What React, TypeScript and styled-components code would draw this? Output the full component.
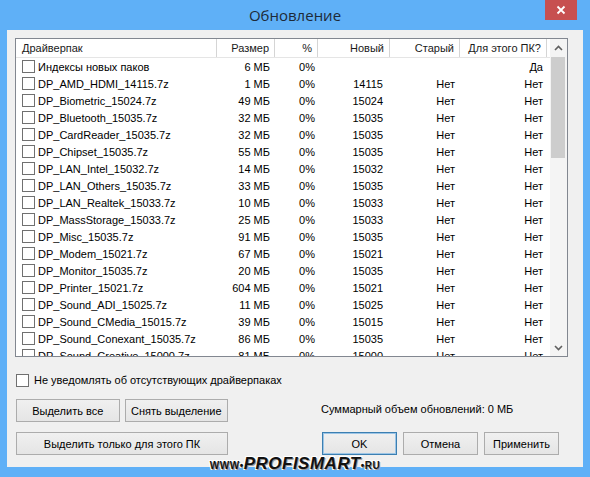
import styled, { createGlobalStyle } from "styled-components";

const GlobalStyle = createGlobalStyle`
  html, body {
    margin: 0;
    padding: 0;
  }
  body {
    font-family: "Liberation Sans", Arial, sans-serif;
    font-size: 11px;
    color: #000;
  }
  * {
    box-sizing: border-box;
  }
`;

const Window = styled.div`
  position: relative;
  width: 590px;
  height: 477px;
  background: #5fb0f7;
  display: flex;
  flex-direction: column;
  padding: 0 7px 10px 7px;
  overflow: hidden;
`;

const TitleBar = styled.div`
  height: 30px;
  display: grid;
  grid-template-columns: 1fr auto 1fr;
  align-items: center;
`;

const Title = styled.div`
  grid-column: 2;
  font-family: "Open Sans", "Noto Sans", sans-serif;
  font-size: 15px;
  color: #1d2a38;
  padding-bottom: 1px;
`;

const CloseBtn = styled.div`
  grid-column: 3;
  justify-self: end;
  align-self: start;
  width: 32px;
  height: 20px;
  margin-right: 6px;
  background: #c75050;
  display: flex;
  align-items: center;
  justify-content: center;
`;

const Panel = styled.div`
  flex: 1;
  background: #f0f0f0;
  padding: 8px 15px 0 8px;
  display: flex;
  flex-direction: column;
`;

const ListView = styled.div`
  height: 319px;
  border: 1px solid #828790;
  background: #fff;
  display: flex;
  overflow: hidden;
`;

const Table = styled.div`
  flex: 1;
  display: flex;
  flex-direction: column;
  overflow: hidden;
`;

const cols = "201px 58px 43px 72px 70px 87px 1fr";

const HeaderRow = styled.div`
  display: grid;
  grid-template-columns: ${cols};
  height: 19px;
  border-bottom: 1px solid #e5e5e5;
  flex-shrink: 0;
`;

const HeadCell = styled.div<{ $left?: boolean }>`
  display: flex;
  align-items: center;
  justify-content: ${(p) => (p.$left ? "flex-start" : "flex-end")};
  padding: 0 5px 0 6px;
  border-right: 1px solid #d5d5d5;
  white-space: nowrap;
  color: #1a1a1a;
`;

const HeadFill = styled.div``;

const Row = styled.div`
  display: grid;
  grid-template-columns: ${cols};
  height: 17px;
  flex-shrink: 0;
`;

const Cell = styled.div<{ $left?: boolean; $pad?: number }>`
  display: flex;
  align-items: center;
  justify-content: ${(p) => (p.$left ? "flex-start" : "flex-end")};
  padding-left: 6px;
  padding-right: ${(p) => p.$pad ?? 5}px;
  white-space: nowrap;
  overflow: hidden;
`;

const Box = styled.span`
  width: 13px;
  height: 13px;
  border: 1px solid #707070;
  background: #fff;
  flex-shrink: 0;
  display: inline-block;
`;

const RowBox = styled(Box)`
  margin-right: 3px;
`;

const ScrollBar = styled.div`
  width: 17px;
  background: #f4f4f4;
  display: flex;
  flex-direction: column;
`;

const ScrollArrow = styled.div`
  height: 17px;
  display: flex;
  align-items: center;
  justify-content: center;
`;

const Track = styled.div`
  flex: 1;
  padding: 1px 2px 0 1px;
`;

const Thumb = styled.div`
  height: 101px;
  background: #cdcdcd;
`;

const OptionRow = styled.label`
  display: flex;
  align-items: center;
  gap: 5px;
  margin: 16px 0 0 1px;
  height: 14px;
`;

const Bottom = styled.div`
  display: grid;
  grid-template-columns: 212px 1fr;
  grid-template-rows: 23px 23px;
  row-gap: 10px;
  column-gap: 93px;
  margin: 12px 0 0 1px;
`;

const ButtonPair = styled.div`
  display: flex;
  gap: 5px;
`;

const ButtonTrio = styled.div`
  display: flex;
  gap: 6px;
  margin-left: 1px;
`;

const Button = styled.button<{ $w?: number; $default?: boolean }>`
  width: ${(p) => (p.$w ? `${p.$w}px` : "auto")};
  flex: ${(p) => (p.$w ? "none" : "1")};
  height: 23px;
  padding: 0;
  font-family: "Liberation Sans", Arial, sans-serif;
  font-size: 11px;
  color: #000;
  background: linear-gradient(#f0f0f0, #e5e5e5);
  border: 1px solid ${(p) => (p.$default ? "#3c7fb1" : "#acacac")};
  box-shadow: ${(p) => (p.$default ? "inset 0 0 0 1px #9cc5e6" : "none")};
`;

const Summary = styled.div`
  display: flex;
  align-items: center;
  padding-bottom: 4px;
  color: #000;
`;

const Watermark = styled.div`
  position: absolute;
  left: 50%;
  bottom: 3px;
  transform: translateX(-50%);
  display: flex;
  align-items: baseline;
  font-family: "Liberation Sans", Arial, sans-serif;
  font-weight: bold;
  font-style: italic;
  color: #111;
  text-shadow: 1px 1px 0 #9a9a9a, -1px -1px 0 #fff, 1px -1px 0 #fff, -1px 1px 0 #fff;
  white-space: nowrap;
`;

const WmSmall = styled.span`
  font-size: 10px;
  font-style: normal;
  letter-spacing: 0.5px;
`;

const WmBig = styled.span`
  font-size: 17px;
  letter-spacing: 0.5px;
`;

interface IPack {
  name: string;
  size: string;
  fresh: string;
  old: string;
  mine: string;
}

const packs: IPack[] = [
  { name: "Индексы новых паков", size: "6 МБ", fresh: "", old: "", mine: "Да" },
  { name: "DP_AMD_HDMI_14115.7z", size: "1 МБ", fresh: "14115", old: "Нет", mine: "Нет" },
  { name: "DP_Biometric_15024.7z", size: "49 МБ", fresh: "15024", old: "Нет", mine: "Нет" },
  { name: "DP_Bluetooth_15035.7z", size: "32 МБ", fresh: "15035", old: "Нет", mine: "Нет" },
  { name: "DP_CardReader_15035.7z", size: "32 МБ", fresh: "15035", old: "Нет", mine: "Нет" },
  { name: "DP_Chipset_15035.7z", size: "55 МБ", fresh: "15035", old: "Нет", mine: "Нет" },
  { name: "DP_LAN_Intel_15032.7z", size: "14 МБ", fresh: "15032", old: "Нет", mine: "Нет" },
  { name: "DP_LAN_Others_15035.7z", size: "33 МБ", fresh: "15035", old: "Нет", mine: "Нет" },
  { name: "DP_LAN_Realtek_15033.7z", size: "10 МБ", fresh: "15033", old: "Нет", mine: "Нет" },
  { name: "DP_MassStorage_15033.7z", size: "25 МБ", fresh: "15033", old: "Нет", mine: "Нет" },
  { name: "DP_Misc_15035.7z", size: "91 МБ", fresh: "15035", old: "Нет", mine: "Нет" },
  { name: "DP_Modem_15021.7z", size: "67 МБ", fresh: "15021", old: "Нет", mine: "Нет" },
  { name: "DP_Monitor_15035.7z", size: "20 МБ", fresh: "15035", old: "Нет", mine: "Нет" },
  { name: "DP_Printer_15021.7z", size: "604 МБ", fresh: "15021", old: "Нет", mine: "Нет" },
  { name: "DP_Sound_ADI_15025.7z", size: "11 МБ", fresh: "15025", old: "Нет", mine: "Нет" },
  { name: "DP_Sound_CMedia_15015.7z", size: "39 МБ", fresh: "15015", old: "Нет", mine: "Нет" },
  { name: "DP_Sound_Conexant_15035.7z", size: "86 МБ", fresh: "15035", old: "Нет", mine: "Нет" },
  { name: "DP_Sound_Creative_15000.7z", size: "81 МБ", fresh: "15000", old: "Нет", mine: "Нет" },
];

function Chevron({ up }: { up?: boolean }) {
  return (
    <svg width="9" height="6" viewBox="0 0 9 6">
      <path
        d={up ? "M1 5 L4.5 1.5 L8 5" : "M1 1 L4.5 4.5 L8 1"}
        fill="none"
        stroke="#606060"
        strokeWidth="1.6"
      />
    </svg>
  );
}

function App() {
  return (
    <>
      <GlobalStyle />
      <Window>
        <TitleBar>
          <Title>Обновление</Title>
          <CloseBtn>
            <svg width="10" height="10" viewBox="0 0 10 10">
              <path d="M1.5 1.5 L8.5 8.5 M8.5 1.5 L1.5 8.5" stroke="#fff" strokeWidth="1.8" />
            </svg>
          </CloseBtn>
        </TitleBar>
        <Panel>
          <ListView>
            <Table>
              <HeaderRow>
                <HeadCell $left>Драйверпак</HeadCell>
                <HeadCell>Размер</HeadCell>
                <HeadCell>%</HeadCell>
                <HeadCell>Новый</HeadCell>
                <HeadCell>Старый</HeadCell>
                <HeadCell>Для этого ПК?</HeadCell>
                <HeadFill />
              </HeaderRow>
              {packs.map((p) => (
                <Row key={p.name}>
                  <Cell $left>
                    <RowBox />
                    {p.name}
                  </Cell>
                  <Cell>{p.size}</Cell>
                  <Cell $pad={3}>0%</Cell>
                  <Cell $pad={7}>{p.fresh}</Cell>
                  <Cell>{p.old}</Cell>
                  <Cell $pad={4}>{p.mine}</Cell>
                  <div />
                </Row>
              ))}
            </Table>
            <ScrollBar>
              <ScrollArrow>
                <Chevron up />
              </ScrollArrow>
              <Track>
                <Thumb />
              </Track>
              <ScrollArrow>
                <Chevron />
              </ScrollArrow>
            </ScrollBar>
          </ListView>
          <OptionRow>
            <Box />
            Не уведомлять об отсутствующих драйверпаках
          </OptionRow>
          <Bottom>
            <ButtonPair>
              <Button>Выделить все</Button>
              <Button>Снять выделение</Button>
            </ButtonPair>
            <Summary>Суммарный объем обновлений: 0 МБ</Summary>
            <Button>Выделить только для этого ПК</Button>
            <ButtonTrio>
              <Button $w={75} $default>
                OK
              </Button>
              <Button $w={75}>Отмена</Button>
              <Button $w={75}>Применить</Button>
            </ButtonTrio>
          </Bottom>
        </Panel>
        <Watermark>
          <WmSmall>WWW</WmSmall>
          <WmSmall>•</WmSmall>
          <WmBig>PROFISMART</WmBig>
          <WmSmall>•RU</WmSmall>
        </Watermark>
      </Window>
    </>
  );
}

export default App;
